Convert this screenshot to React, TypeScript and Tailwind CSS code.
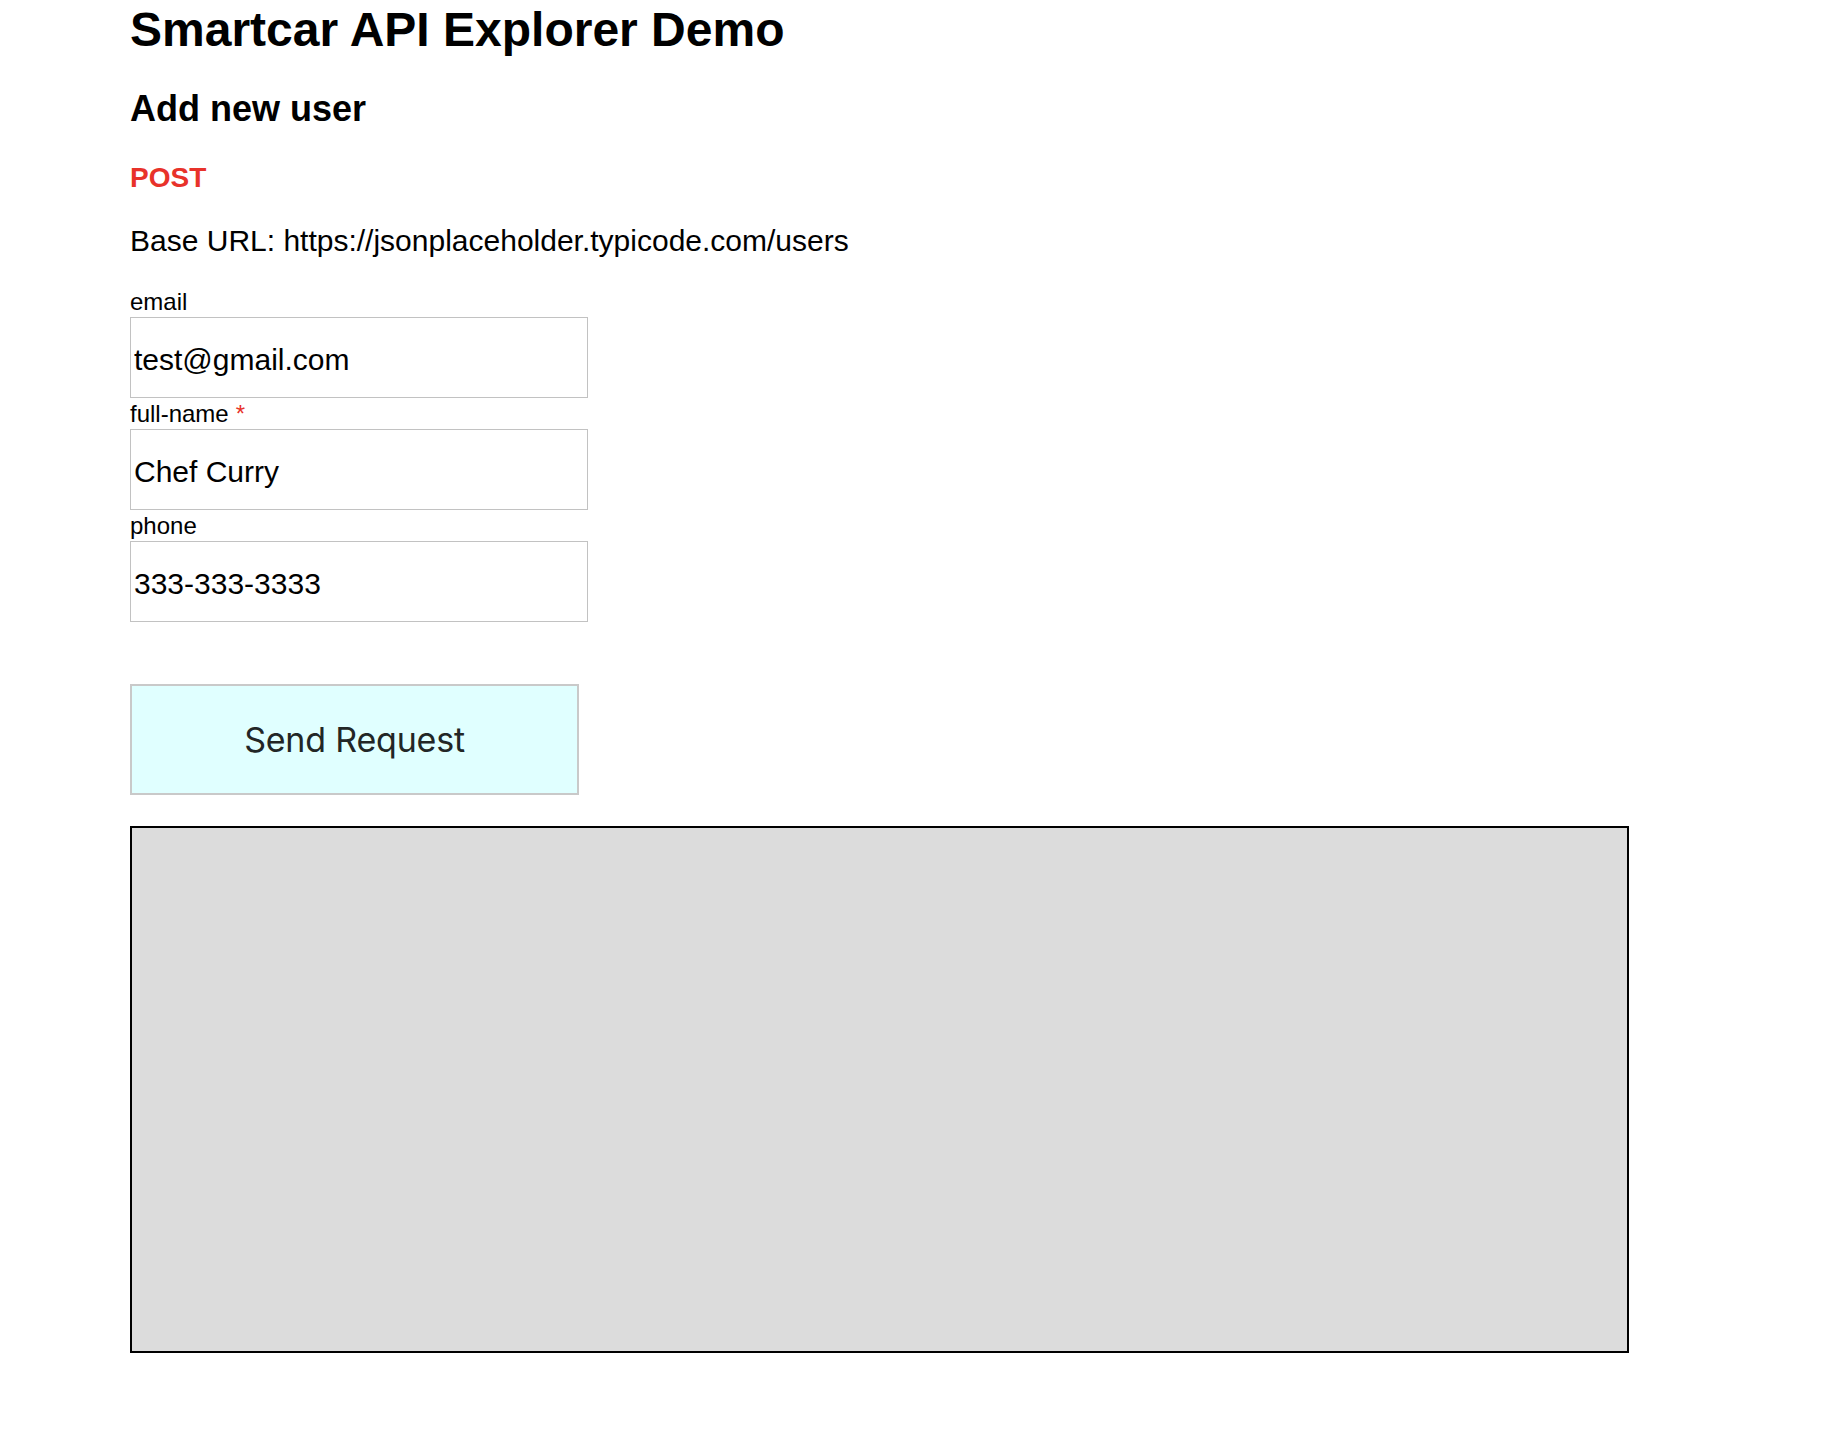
import React, { useState } from 'react';

type Field = {
  name: string;
  value: string;
  required?: boolean;
};

const initialFields: Field[] = [
  { name: 'email', value: 'test@gmail.com' },
  { name: 'full-name', value: 'Chef Curry', required: true },
  { name: 'phone', value: '333-333-3333' },
];

export default function App() {
  const [fields, setFields] = useState<Field[]>(initialFields);
  const [response, setResponse] = useState<string>('');

  const updateField = (name: string, value: string) => {
    setFields((prev) =>
      prev.map((f) => (f.name === name ? { ...f, value } : f)),
    );
  };

  return (
    <div className="min-h-screen bg-white pl-[130px] text-black font-['Liberation_Sans',Arial,sans-serif]">
      {/* Header */}
      <h1 className="pt-[6px] text-[48px] font-bold leading-[48px]">
        Smartcar API Explorer Demo
      </h1>
      <h2 className="mt-[37px] text-[36px] font-bold leading-[36px]">
        Add new user
      </h2>
      <h3 className="mt-[37px] text-[28px] font-bold leading-[28px] text-[#e8322a]">
        POST
      </h3>
      <p className="mt-[34px] text-[30px] leading-[30px]">
        Base URL: https://jsonplaceholder.typicode.com/users
      </p>

      {/* Form */}
      <form
        className="mt-[34px] flex flex-col"
        onSubmit={(e) => e.preventDefault()}
      >
        {fields.map((field) => (
          <div key={field.name} className="mb-[4px] flex flex-col">
            <label className="text-[24px] leading-[24px]">
              {field.name}
              {field.required && (
                <span className="ml-[7px] text-[#e8322a]">*</span>
              )}
            </label>
            <input
              value={field.value}
              onChange={(e) => updateField(field.name, e.target.value)}
              className="mt-[3px] h-[81px] w-[458px] border-[1.5px] border-[#c2c2c2] px-[3px] pt-[4px] text-[30px] text-black outline-none font-['Liberation_Sans',Arial,sans-serif]"
            />
          </div>
        ))}

        <button
          type="submit"
          onClick={() => setResponse('')}
          className="mt-[58px] h-[111px] w-[449px] border-2 border-[#c9c9c9] bg-[#e0ffff] text-[34px] tracking-[-0.2px] text-[#222626] font-['Inter',Roboto,sans-serif]"
        >
          Send Request
        </button>
      </form>

      {/* Response */}
      <div className="mt-[31px] h-[527px] w-[1499px] border-2 border-black bg-[#dcdcdc] whitespace-pre font-['Liberation_Mono',monospace]">
        {response}
      </div>
    </div>
  );
}
